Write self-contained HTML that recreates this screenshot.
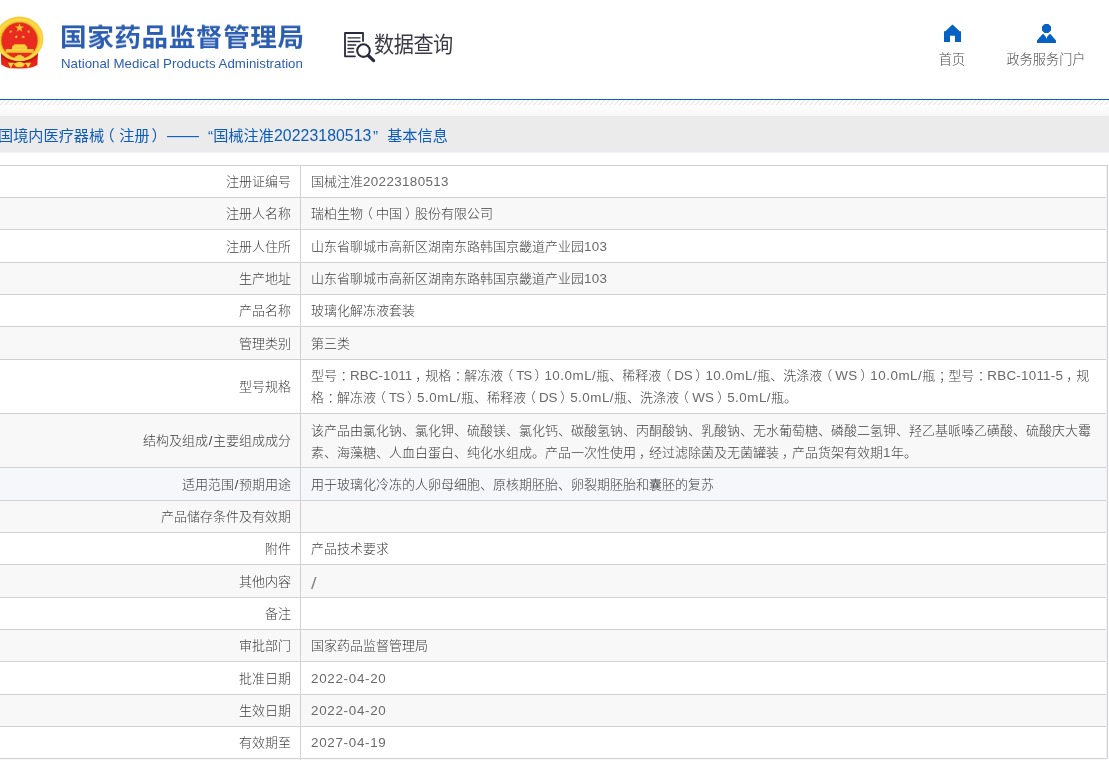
<!DOCTYPE html>
<html lang="zh-CN">
<head>
<meta charset="utf-8">
<title>国家药品监督管理局 数据查询</title>
<style>
html,body{margin:0;padding:0;}
body{width:1109px;height:760px;overflow:hidden;position:relative;background:#fff;
 font-family:"Liberation Sans","Noto Sans CJK SC",sans-serif;color:#555;}
.abs{position:absolute;}
#tbl,#title,#stext,#en,#cn,.nav{will-change:transform;}
#emblem{left:-6px;top:14px;}
#cn{left:60px;top:18.3px;font-size:26.6px;font-weight:700;color:#2b5db0;letter-spacing:0.6px;line-height:38px;white-space:nowrap;transform:scaleY(0.945);transform-origin:0 31.5px;}
#en{left:60.5px;top:55px;font-size:13.28px;color:#2b5db0;line-height:18px;white-space:nowrap;letter-spacing:0.02px;}
#sicon{left:340px;top:28px;}
#stext{left:374px;top:29px;font-size:20.2px;color:#3b3b45;line-height:32px;white-space:nowrap;letter-spacing:-0.5px;transform:scaleY(1.08);transform-origin:0 25px;}
.nav{font-size:13.15px;font-weight:300;color:#4a4a4a;line-height:18px;white-space:nowrap;text-align:center;}
#blue{left:0;top:99px;width:1109px;height:1px;background:#0b5fbd;}
#hatch{left:0;top:100px;}
#grad{left:0;top:105px;width:1109px;height:11px;background:linear-gradient(#fff,#f7f7f7);}
#band{left:0;top:116px;width:1109px;height:36px;background:#ebebeb;border-bottom:1px solid #f0f2fa;}
#title{left:-2.2px;top:125px;font-size:15.17px;color:#0d5cbd;line-height:22px;white-space:nowrap;}
#tbl{left:-200px;top:165px;width:1307px;height:594px;border-right:1px solid #d2d0d0;}
.r{font-weight:300;color:#3d3d3d;position:absolute;left:0;width:1307px;border-top:1px solid #d2d0d0;box-sizing:border-box;font-size:13px;line-height:21.67px;}
.r.g{background:#f8f8f8;}
.r.h{background:#f5f7fa;}
.k{padding-top:1px;position:absolute;left:0;top:0;bottom:0;width:500px;padding-right:9px;box-sizing:border-box;text-align:right;display:flex;align-items:center;justify-content:flex-end;white-space:nowrap;}
.v{padding-top:1px;position:absolute;left:500px;top:0;bottom:0;right:0;border-left:1px solid #d2d0d0;padding-left:10px;display:flex;align-items:center;white-space:nowrap;}
.n{letter-spacing:0.42px;}
.r .n{letter-spacing:0.355px;}
.r .n,.r .a,.r .b{color:#6a6a6a;font-size:13.4px;}
.a1{letter-spacing:0.09px;}.a2{letter-spacing:0.24px;}.r .ts{letter-spacing:-0.8px;font-size:13px;}.ds{letter-spacing:-0.3px;}.ws{letter-spacing:0.2px;}
.b{letter-spacing:0.505px;}
.r .d{letter-spacing:0.70px;}
.sl{padding:0 0.7px;}
.sl2{color:#888;font-size:16px;line-height:20px;position:relative;top:2.3px;left:0.2px;display:inline-block;transform:scaleX(1.25);transform-origin:0 50%;}
.pl{position:relative;left:-3px;}
#title .pl{left:-4.5px;}#title .pr{left:2px;}
.pr{position:relative;left:3px;}
.pc{position:relative;left:3.5px;}
.pm{position:relative;left:3px;}
</style>
</head>
<body>
<!-- header -->
<svg id="emblem" class="abs" width="54" height="58" viewBox="-6 14 54 58">
  <defs>
    <radialGradient id="gg" cx="19.5" cy="39.5" r="24" gradientUnits="userSpaceOnUse" gradientTransform="translate(0 2.9) scale(1 0.93)">
      <stop offset="0.74" stop-color="#eda41a"/>
      <stop offset="0.80" stop-color="#f7c62f"/>
      <stop offset="0.90" stop-color="#fbdc48"/>
      <stop offset="1" stop-color="#f8cb38"/>
    </radialGradient>
    <linearGradient id="rg" x1="0" y1="53" x2="0" y2="68" gradientUnits="userSpaceOnUse">
      <stop offset="0" stop-color="#c9170f"/><stop offset="0.55" stop-color="#e2241a"/><stop offset="1" stop-color="#e8291d"/>
    </linearGradient>
  </defs>
  <path d="M0.9 52 H38 L37.4 65 Q33 67.6 28 68.2 L19.5 68.5 L10 68.2 Q5 67.4 1.2 64.6 Z" fill="url(#rg)"/>
  <path d="M3 55.5 Q19.5 70 36 55.5" fill="none" stroke="#c3140d" stroke-width="2.4"/>
  <ellipse cx="19.5" cy="38.85" rx="24" ry="22.35" fill="url(#gg)"/>
  <circle cx="19.5" cy="40.5" r="18.1" fill="#e92a20" stroke="#c98a12" stroke-width="0.5"/>
  <path d="M14.3 58.6 Q14.8 55.6 17 56 Q17.8 54.6 19.5 54.9 Q21.2 54.6 22 56 Q24.2 55.6 24.7 58.6 Q19.5 60.6 14.3 58.6Z" fill="#f6cf3c"/>
  <g fill="#f8d83c">
    <path d="M8 62.8 H13.8 L10.8 68.3 Z"/><path d="M25.2 62.8 H31 L28.2 68.3 Z"/>
    <ellipse cx="19.5" cy="64.6" rx="4.8" ry="2.7"/>
    <path d="M12.5 63 L16 63.6 L15 65 Z"/><path d="M26.5 63 L23 63.6 L24 65 Z"/>
  </g>
  <g fill="#f6c932">
    <polygon points="19.50,23.20 20.61,26.38 23.97,26.45 21.29,28.48 22.26,31.70 19.50,29.78 16.74,31.70 17.71,28.48 15.03,26.45 18.39,26.38"/><polygon points="11.65,30.05 11.39,31.39 12.56,32.10 11.21,32.26 10.90,33.59 10.32,32.36 8.96,32.47 9.96,31.54 9.43,30.29 10.62,30.94"/><polygon points="27.65,30.05 28.68,30.94 29.87,30.29 29.34,31.54 30.34,32.47 28.98,32.36 28.40,33.59 28.09,32.26 26.74,32.10 27.91,31.39"/><polygon points="16.53,35.03 16.75,36.37 18.08,36.64 16.87,37.26 17.03,38.61 16.07,37.65 14.83,38.22 15.45,37.01 14.52,36.01 15.87,36.22"/><polygon points="22.97,35.03 23.63,36.22 24.98,36.01 24.05,37.01 24.67,38.22 23.43,37.65 22.47,38.61 22.63,37.26 21.42,36.64 22.75,36.37"/>
    <path d="M14.2 44.2 H25 L26.2 46.4 H27.2 V49.5 H33.6 V52.7 H5.6 V49.5 H12 V46.4 H13 Z"/>
  </g>
  <path d="M12.4 46.3 H27 M6 49.6 H33.4" stroke="#f9e060" stroke-width="0.7" fill="none"/>
</svg>
<div id="cn" class="abs">国家药品监督管理局</div>
<div id="en" class="abs">National Medical Products Administration</div>

<svg id="sicon" class="abs" width="40" height="38" viewBox="340 28 40 38" fill="none" stroke="#2a2a3e" stroke-linecap="round" stroke-linejoin="round">
  <path d="M363 41 V33 H345 V56.3 H355" stroke-width="1.8"/>
  <path d="M348 37.8 H360 M348 41.5 H360" stroke-width="1.3"/>
  <path d="M348 45 H355.7 M348 48.6 H353.6 M348 52 H353.6" stroke-width="1.5"/>
  <circle cx="363.5" cy="50.6" r="6.3" stroke-width="2.1"/>
  <path d="M368.3 55.5 L373.6 60.6" stroke-width="3.2"/>
</svg>
<div id="stext" class="abs">数据查询</div>

<svg class="abs" style="left:940px;top:20px" width="26" height="26" viewBox="940 20 26 26">
  <path d="M944 42 V31.2 H945.3 L952.5 24.6 L959.7 31.2 H961 V42 H955 V35.8 H950 V42 Z" fill="#0562c3"/>
</svg>
<div class="abs nav" style="left:922px;top:51px;width:60px;">首页</div>
<svg class="abs" style="left:1033px;top:20px" width="28" height="26" viewBox="1033 20 28 26">
  <path d="M1044.6 24 H1048.4 L1051 26.6 V30.4 L1048.4 33 H1044.6 L1042 30.4 V26.6 Z" fill="#0562c3"/>
  <path d="M1037 43 V40.4 L1042.6 34 H1043.4 L1046 37 V38.2 H1047 V37 L1049.6 34 H1050.4 L1056 40.4 V43 Z" fill="#0562c3"/>
</svg>
<div class="abs nav" style="left:996px;top:51px;width:100px;">政务服务门户</div>

<div id="blue" class="abs"></div>
<svg id="hatch" class="abs" width="1109" height="5" viewBox="0 0 1109 5">
  <defs><pattern id="hp" width="4.76" height="5" patternUnits="userSpaceOnUse" x="0.3">
    <path d="M-5.26 5.5 L0.74 -0.5 M-0.5 5.5 L5.5 -0.5 M4.26 5.5 L10.26 -0.5" stroke="#d9d9d9" stroke-width="0.95" fill="none"/>
  </pattern></defs>
  <rect width="1109" height="5" fill="url(#hp)"/>
</svg>
<div id="grad" class="abs"></div>
<div id="band" class="abs"></div>
<div id="title" class="abs"><span class="abs" style="left:0">国境内医疗器械<span class="pl">（</span>注册<span class="pr">）</span></span><span class="abs" style="left:169px;font-size:16px">——</span><span class="abs" style="left:210px">“</span><span class="abs" style="left:215.2px">国械注准</span><span class="abs" style="left:276px;font-size:15.8px;letter-spacing:0.07px">20223180513</span><span class="abs" style="left:375px">”</span><span class="abs" style="left:389.2px">基本信息</span></div>

<!-- table -->
<div class="abs" style="left:1106px;top:166px;width:1px;height:594px;background:#eef1fa;z-index:3"></div>
<div id="tbl" class="abs">
  <div class="r" style="top:0px;height:32px"><div class="k">注册证编号</div><div class="v">国械注准<span class="n">20223180513</span></div></div>
  <div class="r g" style="top:32px;height:32px"><div class="k">注册人名称</div><div class="v">瑞柏生物<span class="pl">（</span>中国<span class="pr">）</span>股份有限公司</div></div>
  <div class="r" style="top:64px;height:33px"><div class="k">注册人住所</div><div class="v">山东省聊城市高新区湖南东路韩国京畿道产业园<span class="n">103</span></div></div>
  <div class="r g" style="top:97px;height:32px"><div class="k">生产地址</div><div class="v">山东省聊城市高新区湖南东路韩国京畿道产业园<span class="n">103</span></div></div>
  <div class="r" style="top:129px;height:32px"><div class="k">产品名称</div><div class="v">玻璃化解冻液套装</div></div>
  <div class="r g" style="top:161px;height:33px"><div class="k">管理类别</div><div class="v">第三类</div></div>
  <div class="r" style="top:194px;height:54px"><div class="k">型号规格</div><div class="v"><div>型号<span class="pc">：</span><span class="a a1">RBC-1011</span><span class="pm">，</span>规格<span class="pc">：</span>解冻液<span class="pl">（</span><span class="a ts">TS</span><span class="pr">）</span><span class="b">10.0mL/</span>瓶、稀释液<span class="pl">（</span><span class="a ds">DS</span><span class="pr">）</span><span class="b">10.0mL/</span>瓶、洗涤液<span class="pl">（</span><span class="a ws">WS</span><span class="pr">）</span><span class="b">10.0mL/</span>瓶<span class="pc">；</span>型号<span class="pc">：</span><span class="a a2">RBC-1011-5</span><span class="pm">，</span>规<br>格<span class="pc">：</span>解冻液<span class="pl">（</span><span class="a ts">TS</span><span class="pr">）</span><span class="b">5.0mL/</span>瓶、稀释液<span class="pl">（</span><span class="a ds">DS</span><span class="pr">）</span><span class="b">5.0mL/</span>瓶、洗涤液<span class="pl">（</span><span class="a ws">WS</span><span class="pr">）</span><span class="b">5.0mL/</span>瓶。</div></div></div>
  <div class="r g" style="top:248px;height:54px"><div class="k">结构及组成<span class="sl">/</span>主要组成成分</div><div class="v" style="padding-top:3px"><div>该产品由氯化钠、氯化钾、硫酸镁、氯化钙、碳酸氢钠、丙酮酸钠、乳酸钠、无水葡萄糖、磷酸二氢钾、羟乙基哌嗪乙磺酸、硫酸庆大霉<br>素、海藻糖、人血白蛋白、纯化水组成。产品一次性使用<span class="pm">，</span>经过滤除菌及无菌罐装<span class="pm">，</span>产品货架有效期<span class="n">1</span>年。</div></div></div>
  <div class="r h" style="top:302px;height:33px"><div class="k">适用范围<span class="sl">/</span>预期用途</div><div class="v">用于玻璃化冷冻的人卵母细胞、原核期胚胎、卵裂期胚胎和囊胚的复苏</div></div>
  <div class="r g" style="top:335px;height:32px"><div class="k">产品储存条件及有效期</div><div class="v"></div></div>
  <div class="r" style="top:367px;height:32px"><div class="k">附件</div><div class="v">产品技术要求</div></div>
  <div class="r g" style="top:399px;height:33px"><div class="k">其他内容</div><div class="v"><span class="sl2">/</span></div></div>
  <div class="r" style="top:432px;height:32px"><div class="k">备注</div><div class="v"></div></div>
  <div class="r g" style="top:464px;height:32px"><div class="k">审批部门</div><div class="v">国家药品监督管理局</div></div>
  <div class="r" style="top:496px;height:33px"><div class="k">批准日期</div><div class="v"><span class="n d">2022-04-20</span></div></div>
  <div class="r g" style="top:529px;height:32px"><div class="k">生效日期</div><div class="v"><span class="n d">2022-04-20</span></div></div>
  <div class="r" style="top:561px;height:32px"><div class="k">有效期至</div><div class="v"><span class="n d">2027-04-19</span></div></div>
  <div class="r g" style="top:593px;height:2px"><div class="v"></div></div>
</div>
</body>
</html>
